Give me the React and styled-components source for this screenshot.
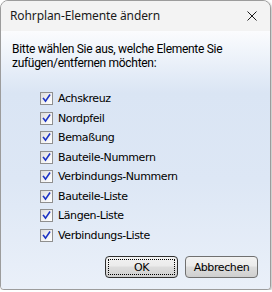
import React, { useState } from 'react';
import styled, { createGlobalStyle } from 'styled-components';

const GlobalStyle = createGlobalStyle`
    html, body {
        margin: 0;
        padding: 0;
        background: #ffffff;
    }
`;

const ITEMS = [
    'Achskreuz',
    'Nordpfeil',
    'Bemaßung',
    'Bauteile-Nummern',
    'Verbindungs-Nummern',
    'Bauteile-Liste',
    'Längen-Liste',
    'Verbindungs-Liste'
];

const CheckMark = () => (
    <svg width="9" height="9" viewBox="0 0 9 9">
        <path d="M1.5 4.5 L3.5 7.2 L7.6 1.2" fill="none" stroke="#1c33c4" strokeWidth="1.6" strokeLinecap="square" />
    </svg>
);

const CloseIcon = () => (
    <svg width="10" height="10" viewBox="0 0 10 10">
        <path d="M0.5 0.5 L9.5 9.5 M9.5 0.5 L0.5 9.5" stroke="#1a1a1a" strokeWidth="1" />
    </svg>
);

const App = () => {
    const [checked, setChecked] = useState(ITEMS.map(() => true));

    const toggle = (i) => {
        setChecked(checked.map((c, idx) => (idx === i ? !c : c)));
    };

    return (<>
        <GlobalStyle />
        <Window>
            <TitleBar>
                <Title>Rohrplan-Elemente ändern</Title>
                <CloseButton><CloseIcon /></CloseButton>
            </TitleBar>
            <Body>
                <Intro>Bitte wählen Sie aus, welche Elemente Sie<br />zufügen/entfernen möchten:</Intro>
                <List>
                    {ITEMS.map((label, i) => (
                        <Row key={label} onClick={() => toggle(i)}>
                            <Box>{checked[i] && <CheckMark />}</Box>
                            <Label>{label}</Label>
                        </Row>
                    ))}
                </List>
                <Buttons>
                    <Button $focused>
                        <Focus $focused>OK</Focus>
                    </Button>
                    <Button>
                        <Focus>Abbrechen</Focus>
                    </Button>
                </Buttons>
            </Body>
        </Window>
    </>);
};

export default App;

const Window = styled.div`
    width: 271px;
    height: 290px;
    box-sizing: border-box;
    border: 1px solid #9c9c9c;
    border-radius: 8px 8px 4px 4px;
    overflow: hidden;
    display: flex;
    flex-direction: column;
    background: #f3f3f3;
    box-shadow: 1px 1px 2px rgba(0, 0, 0, 0.25);
`;

const TitleBar = styled.div`
    height: 30px;
    display: flex;
    align-items: center;
    justify-content: space-between;
    padding: 0 13px 0 9px;
    background: #f3f3f3;
    flex-shrink: 0;
`;

const Title = styled.div`
    font-family: "Noto Sans", "Open Sans", sans-serif;
    font-size: 12px;
    letter-spacing: -0.1px;
    color: #1a1a1a;
    margin-top: -1px;
`;

const CloseButton = styled.div`
    display: flex;
    align-items: center;
`;

const Body = styled.div`
    flex: 1;
    display: flex;
    flex-direction: column;
    padding: 11px 12px 11px 11px;
    background: linear-gradient(to bottom, #fbfcfe 0px, #dae5f4 62px, #dde7f5 150px, #eaf0f9 100%);
`;

const Intro = styled.p`
    margin: 0;
    font-family: Roboto, "Noto Sans", sans-serif;
    font-size: 12px;
    letter-spacing: -0.3px;
    line-height: 14px;
    color: #000;
    white-space: nowrap;
`;

const List = styled.div`
    display: flex;
    flex-direction: column;
    gap: 6.5px;
    margin: 22px 0 0 28px;
`;

const Row = styled.div`
    display: flex;
    align-items: center;
    height: 13px;
    cursor: default;
`;

const Box = styled.div`
    width: 13px;
    height: 13px;
    box-sizing: border-box;
    border: 1px solid #8f8f8f;
    background: linear-gradient(135deg, #dcdcdc 0%, #f4f4f4 60%, #ffffff 100%);
    display: flex;
    align-items: center;
    justify-content: center;
    flex-shrink: 0;
`;

const Label = styled.span`
    margin-left: 5px;
    font-family: "DejaVu Sans", sans-serif;
    font-size: 11px;
    letter-spacing: -0.4px;
    color: #000;
`;

const Buttons = styled.div`
    margin-top: auto;
    display: flex;
    justify-content: flex-end;
    gap: 7px;
`;

const Button = styled.div`
    width: 73px;
    height: 22px;
    box-sizing: border-box;
    border: 1px solid ${props => props.$focused ? '#2f2f2f' : '#707070'};
    border-radius: 4px;
    background: linear-gradient(to bottom, #f2f2f2 0%, #ebebeb 45%, #dddddd 50%, #cfcfcf 100%);
    padding: 2px;
    display: flex;
`;

const Focus = styled.div`
    flex: 1;
    display: flex;
    align-items: center;
    justify-content: center;
    border: 1px dotted ${props => props.$focused ? '#000' : 'transparent'};
    font-family: "DejaVu Sans", sans-serif;
    font-size: 11px;
    letter-spacing: -0.4px;
    color: #000;
`;
